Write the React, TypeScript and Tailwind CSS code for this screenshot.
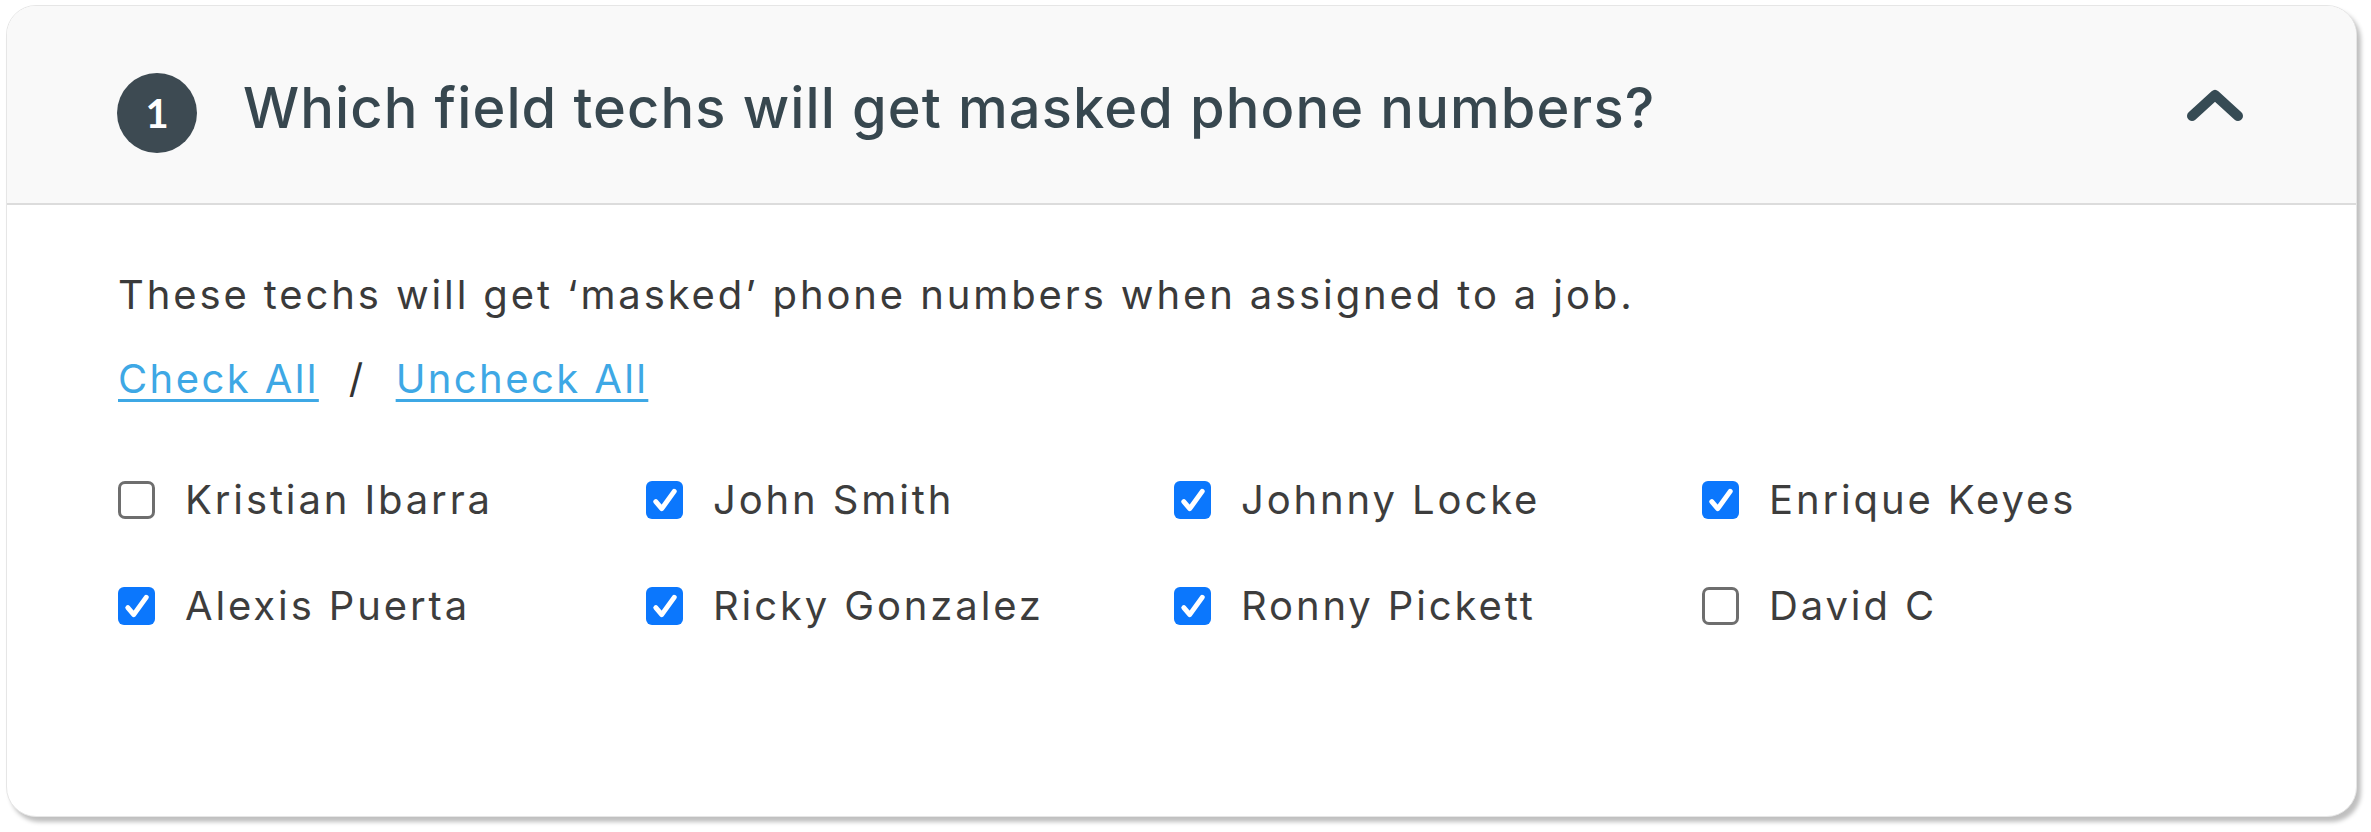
const techs = [
  { name: "Kristian Ibarra", checked: false },
  { name: "John Smith", checked: true },
  { name: "Johnny Locke", checked: true },
  { name: "Enrique Keyes", checked: true },
  { name: "Alexis Puerta", checked: true },
  { name: "Ricky Gonzalez", checked: true },
  { name: "Ronny Pickett", checked: true },
  { name: "David C", checked: false },
];

function Box({ checked }: { checked: boolean }) {
  if (!checked) {
    return <span className="block w-[37px] h-[38px] shrink-0 rounded-[7px] border-[3px] border-[#6e6e6e] bg-white" />;
  }
  return (
    <span className="flex items-center justify-center w-[37px] h-[38px] shrink-0 rounded-[6px] bg-[#0b77fd]">
      <svg width="26" height="26" viewBox="0 0 24 24" fill="none">
        <path d="M3.5 13.5 L9 20 L20.5 4" stroke="white" strokeWidth="4.6" strokeLinecap="round" strokeLinejoin="round" />
      </svg>
    </span>
  );
}

export default function App() {
  return (
    <div className="w-[2371px] h-[832px] bg-white pt-[5px] pl-[6px] font-['Inter',sans-serif]">
      <div className="w-[2351px] h-[812px] rounded-[30px] bg-white border border-[#e6e6e6] shadow-[4px_5px_4px_rgba(0,0,0,0.25)] overflow-hidden flex flex-col">
        <div className="h-[199px] shrink-0 flex items-center bg-[#f9f9f9] border-b-2 border-[#dcdcdc] pl-[110px] pr-[112px]">
          <div className="mt-4 w-[80px] h-[80px] rounded-full bg-[#3d4a52] flex items-center justify-center text-white text-[40px] font-bold font-['Lato',sans-serif]">
            1
          </div>
          <h1 className="ml-[46px] mt-[6px] text-[56px] font-medium text-[#37474f] tracking-[0.02em]">
            Which field techs will get masked phone numbers?
          </h1>
          <svg className="ml-auto" width="58" height="34" viewBox="0 0 58 34" fill="none">
            <path d="M6 28 L29 7 L52 28" stroke="#364b54" strokeWidth="10" strokeLinecap="round" strokeLinejoin="round" />
          </svg>
        </div>
        <div className="pl-[111px] pt-[66px] text-[40px] tracking-[0.072em] text-[#3a3a3a]">
          <p className="leading-[48px]">These techs will get ‘masked’ phone numbers when assigned to a job.</p>
          <div className="mt-[36px] flex items-center leading-[48px] tracking-[0.06em]">
            <a className="text-[#3ea8e5] underline underline-offset-[6px] decoration-[3px]">Check All</a>
            <span className="mx-[30px] text-[#333]">/</span>
            <a className="text-[#3ea8e5] underline underline-offset-[6px] decoration-[3px]">Uncheck All</a>
          </div>
          <div className="mt-[78px] grid grid-cols-[repeat(4,528px)] gap-y-[68px]">
            {techs.map((t) => (
              <label key={t.name} className="flex items-center gap-[30px] h-[38px]">
                <Box checked={t.checked} />
                <span className="text-[#3d3d3d]">{t.name}</span>
              </label>
            ))}
          </div>
        </div>
      </div>
    </div>
  );
}
